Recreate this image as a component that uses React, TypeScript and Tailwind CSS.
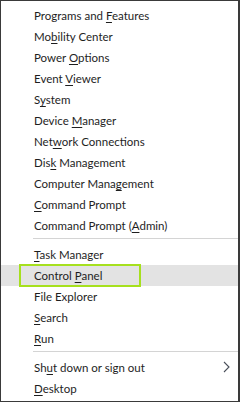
import React from "react";

type Item = { pre: string; key: string; post: string; highlight?: boolean; arrow?: boolean };

const group1: Item[] = [
  { pre: "Programs and ", key: "F", post: "eatures" },
  { pre: "Mo", key: "b", post: "ility Center" },
  { pre: "Power ", key: "O", post: "ptions" },
  { pre: "Event ", key: "V", post: "iewer" },
  { pre: "S", key: "y", post: "stem" },
  { pre: "Device ", key: "M", post: "anager" },
  { pre: "Net", key: "w", post: "ork Connections" },
  { pre: "Dis", key: "k", post: " Management" },
  { pre: "Computer Mana", key: "g", post: "ement" },
  { pre: "", key: "C", post: "ommand Prompt" },
  { pre: "Command Prompt (", key: "A", post: "dmin)" },
];

const group2: Item[] = [
  { pre: "", key: "T", post: "ask Manager" },
  { pre: "Control ", key: "P", post: "anel", highlight: true },
  { pre: "File Explorer", key: "", post: "" },
  { pre: "", key: "S", post: "earch" },
  { pre: "", key: "R", post: "un" },
];

const group3: Item[] = [
  { pre: "Sh", key: "u", post: "t down or sign out", arrow: true },
  { pre: "", key: "D", post: "esktop" },
];

function Row({ item }: { item: Item }) {
  return (
    <div
      className={`relative flex h-[21px] items-center pl-[33px] pr-3 ${
        item.highlight ? "bg-[#e3e3e3]" : ""
      }`}
    >
      {item.highlight && (
        <div className="absolute left-[18px] top-[-1px] h-[23px] w-[122px] border-[2px] border-[#a6e01e]" />
      )}
      <span className="relative whitespace-pre">
        {item.pre}
        {item.key && <span className="underline decoration-1 underline-offset-2">{item.key}</span>}
        {item.post}
      </span>
      {item.arrow && (
        <svg className="absolute left-[222px] top-[4px]" width="7" height="12" viewBox="0 0 7 12">
          <path d="M1 1 L6 6 L1 11" fill="none" stroke="#4a4f5a" strokeWidth="1.1" />
        </svg>
      )}
    </div>
  );
}

function Sep() {
  return (
    <div className="flex h-[8px] flex-col pt-[2px]">
      <div className="ml-[32px] h-px bg-[#d4d4d4]" />
    </div>
  );
}

export default function App() {
  return (
    <div className="h-[403px] w-[240px] bg-white">
      <div
        className="h-[402px] w-[240px] border-b-[1px] border-l-[1px] border-r-[2px] border-t-[1px] border-[#3a3a3a] bg-white pt-[4px] text-[11.5px] text-[#1e1e1e]"
        style={{ fontFamily: 'Lato, "Noto Sans", sans-serif' }}
      >
        {group1.map((it, i) => (
          <Row key={i} item={it} />
        ))}
        <Sep />
        {group2.map((it, i) => (
          <Row key={i} item={it} />
        ))}
        <Sep />
        {group3.map((it, i) => (
          <Row key={i} item={it} />
        ))}
      </div>
    </div>
  );
}
